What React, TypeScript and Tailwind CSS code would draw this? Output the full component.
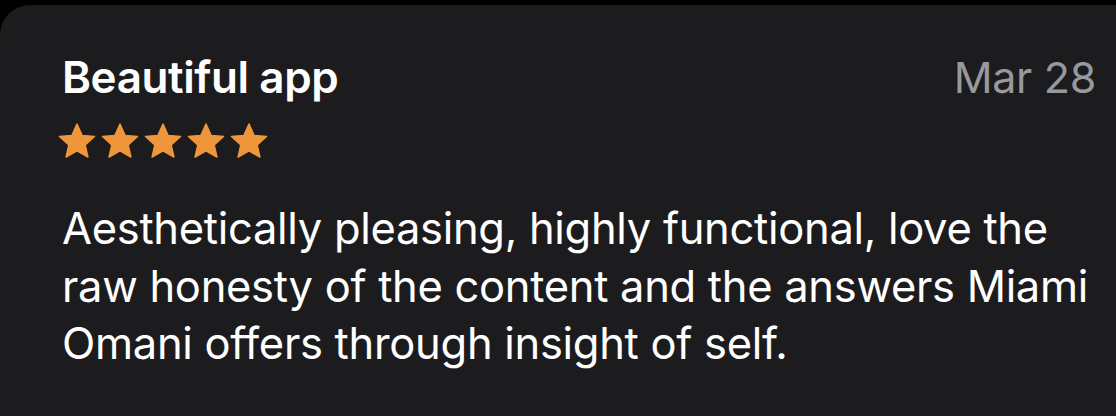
const STAR_COUNT = 5

function Star() {
  return (
    <svg width="40" height="38" viewBox="0 0 24 23" className="shrink-0">
      <path
        d="M12 1.2 L15.06 8.09 L22.6 8.8 L16.95 13.91 L18.6 21.2 L12 17.5 L5.4 21.2 L7.05 13.91 L1.4 8.8 L8.94 8.09 Z"
        fill="#f0963a"
        stroke="#f0963a"
        strokeWidth="0.9"
        strokeLinejoin="round"
      />
    </svg>
  )
}

export default function App() {
  return (
    <div className="w-[1116px] h-[416px] bg-black pt-[5px] overflow-hidden font-['Inter',sans-serif]">
      <div className="h-full bg-[#1c1c1e] rounded-tl-[30px] pl-[62px] pr-[20px] pt-[44px]">
        {/* Header */}
        <div className="flex items-start justify-between">
          <h1 className="text-[44px] leading-[56px] font-semibold text-white tracking-[-0.4px]">
            Beautiful app
          </h1>
          <span className="text-[43px] leading-[56px] text-[#98989e] tracking-[-0.3px]">Mar 28</span>
        </div>

        {/* Rating */}
        <div className="flex gap-[3px] mt-[17px] -ml-[5px]">
          {Array.from({ length: STAR_COUNT }).map((_, i) => (
            <Star key={i} />
          ))}
        </div>

        {/* Body */}
        <p className="mt-[40px] text-[43.5px] leading-[57.5px] text-white tracking-[-0.3px]">
          Aesthetically pleasing, highly functional, love the raw honesty of the content and the
          answers Miami Omani offers through insight of self.
        </p>
      </div>
    </div>
  )
}
